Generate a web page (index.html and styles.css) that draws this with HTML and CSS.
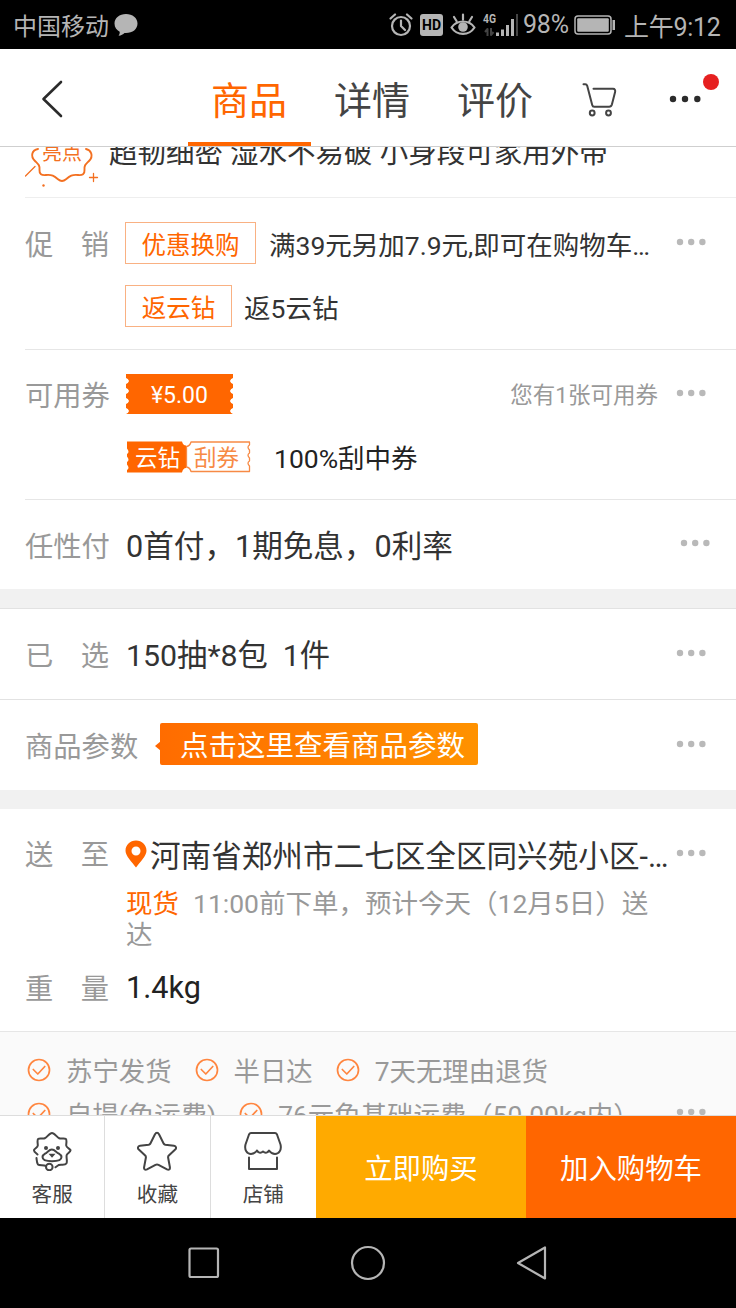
FILE: index.html
```
<!DOCTYPE html>
<html lang="zh-CN">
<head>
<meta charset="utf-8">
<title>商品</title>
<link rel="stylesheet" href="styles.css">
</head>
<body>
<svg class="defs" width="0" height="0" aria-hidden="true">
  <symbol id="dots" viewBox="0 0 30 8"><circle cx="4" cy="4" r="3.2"/><circle cx="15.2" cy="4" r="3.2"/><circle cx="26.400" cy="4" r="3.2"/></symbol>
  <symbol id="check" viewBox="0 0 24 24"><circle cx="12" cy="12" r="10.500"/><path d="M6.300 11.500l4.500 4.500 7-7.500"/></symbol>
</svg>
<div class="phone">
  <header class="status">
    <span class="carrier">中国移动</span>
    <svg class="bubble" viewBox="0 0 24 24"><path d="M12 1C5.500 1 .5 5 .5 10.500c0 3.800 2.200 6.500 5.200 8.200.2 1.700-.4 3-1.200 4 2.700-.2 4.600-1.200 6-2.700 7.500.6 13-3.500 13-9.500C23.500 5 18.500 1 12 1z"/></svg>
    <svg class="alarm" viewBox="0 0 24 24"><circle cx="12" cy="13" r="9"/><path d="M12 7.500V13l4 4M1.500 5.500l4.500-4M22.500 5.500l-4.500-4"/></svg>
    <span class="hd">HD</span>
    <svg class="eye" viewBox="0 0 26 24"><path d="M1.500 14.500C7 6.500 19 6.500 24.500 14.500 19 23 7 23 1.500 14.500zM13 1.500v5M4 4l2.500 4M22 4l-2.500 4"/><circle class="solid" cx="13" cy="14" r="4.800"/></svg>
    <svg class="signal" viewBox="0 0 36 24"><text x="0" y="10" textLength="13" lengthAdjust="spacingAndGlyphs">4G</text><path class="dim" d="M2 19l2.500-3v7M8 15v7l2.500-3"/><path d="M14.500 19.500v3.500M19.500 16.500V23M24.500 12V23M29.500 6V23"/><path class="dim" d="M34 1v22"/></svg>
    <span class="pct">98%</span>
    <svg class="battery" viewBox="0 0 42 20"><rect x="1" y="1" width="36" height="18" rx="3"/><rect class="solid" x="3.200" y="3.200" width="31.600" height="13.600" rx="1"/><path class="solid" d="M38.500 5h2.500v10h-2.500z"/></svg>
    <span class="clock">上午9:12</span>
  </header>

  <nav class="nav">
    <svg class="back" viewBox="0 0 22 38"><path d="M20 2L2.500 19 20 36"/></svg>
    <span class="tab active">商品</span>
    <span class="tab">详情</span>
    <span class="tab">评价</span>
    <svg class="cart" viewBox="0 0 36 36"><path d="M1.500 2.200h1.700c1 0 1.700.6 2 1.600l5 19.200c.3 1.200 1 1.800 2 1.800h15c1.500 0 2.300-.8 2.700-2.200l3.200-12.600c.4-1.700-.3-3.200-2-3.200H11.500"/><circle cx="10.200" cy="31" r="2.400"/><circle cx="26.500" cy="31" r="2.400"/></svg>
    <span class="more"><svg viewBox="0 0 32 8"><circle cx="4" cy="4" r="3.200"/><circle cx="16" cy="4" r="3.200"/><circle cx="28.300" cy="4" r="3.200"/></svg><i class="alert"></i></span>
  </nav>

  <main class="content">
    <section class="highlight">
      <div class="badge">
        <svg viewBox="0 0 76 60"><path d="M13 16c-6 1-8 7-3 12 3 3 5 4 4.500 9-.3 4 2 5.500 6.500 5 6-.6 8 1 12 4.300 3 2.400 5 2.400 8 0 4-3.300 6-4.900 12-4.300 4.500.5 6.800-1 6.500-5-.5-5 1.500-6 4.500-9 5-5 2-11-3-12"/><path class="thin" d="M0.500 43L10 33.500M64.500 44.500h8M68.500 40.500v8"/><circle class="solid" cx="18.500" cy="52.500" r="1.200"/></svg>
        <span>亮点</span>
      </div>
      <p>超韧细密 湿水不易破 小身段可家用外带</p>
    </section>

    <section class="promo inset">
      <div class="line">
        <span class="label wide"><b>促</b><b>销</b></span><span class="tag">优惠换购</span><span class="txt26">满39元另加7.9元,即可在购物车…</span>
        <svg class="dots"><use href="#dots"/></svg>
      </div>
      <div class="line second"><span class="tag short">返云钻</span><span class="txt26">返5云钻</span></div>
    </section>

    <section class="coupon inset">
      <div class="line">
        <span class="label">可用券</span>
        <span class="ticket">¥5.00</span>
        <span class="hint">您有1张可用券</span>
        <svg class="dots"><use href="#dots"/></svg>
      </div>
      <div class="line scratch">
        <span class="duo">
          <svg viewBox="0 0 124 32"><path class="solid" d="M0 .5H55q1 4 4 4V27q-3 0-4 4.500H0V29q3-2 0-5.500V21q3-2 0-5.500V13q3-2 0-5.500z"/><path d="M64 1H122.500V4q-3 2 0 5v3q-3 2 0 5v3q-3 2 0 5v5.500H64q-1-4-4.500-4.500V5.500Q63 5 64 1z"/></svg>
          <span class="duo-a">云钻</span><span class="duo-b">刮券</span>
        </span>
        <span class="win">100%刮中券</span>
      </div>
    </section>

    <section class="pay">
      <span class="label">任性付</span><span class="txt30">0首付，1期免息，0利率</span>
      <svg class="dots"><use href="#dots"/></svg>
    </section>

    <section class="chosen">
      <span class="label wide"><b>已</b><b>选</b></span><span class="txt30 pre">150抽*8包  1件</span>
      <svg class="dots"><use href="#dots"/></svg>
    </section>

    <section class="params">
      <span class="label">商品参数</span>
      <svg class="tip" viewBox="0 0 6 10"><path d="M6 0v10L0 5z"/></svg>
      <span class="banner">点击这里查看商品参数</span>
      <svg class="dots"><use href="#dots"/></svg>
    </section>

    <section class="delivery">
      <div class="line address">
        <span class="label wide"><b>送</b><b>至</b></span>
        <svg class="pin" viewBox="0 0 22 28"><path d="M11 .5C5 .5.500 5 .500 10.700.500 16 7 22 11 27.500 15 22 21.500 16 21.500 10.700 21.500 5 17 .5 11 .5zm0 6a4.500 4.500 0 110 9 4.500 4.500 0 010-9z"/></svg>
        <span class="txt30 place">河南省郑州市二七区全区同兴苑小区-…</span>
        <svg class="dots"><use href="#dots"/></svg>
      </div>
      <p class="eta"><em>现货</em>11:00前下单，预计今天（12月5日）送达</p>
      <div class="line weight"><span class="label wide"><b>重</b><b>量</b></span><span class="txt30 kg">1.4kg</span></div>
    </section>

    <section class="services">
      <div class="srow">
        <svg class="check"><use href="#check"/></svg><span>苏宁发货</span>
        <svg class="check"><use href="#check"/></svg><span>半日达</span>
        <svg class="check"><use href="#check"/></svg><span>7天无理由退货</span>
      </div>
      <div class="srow next">
        <svg class="check"><use href="#check"/></svg><span>自提(免运费)</span>
        <svg class="check"><use href="#check"/></svg><span>76元免基础运费（50.00kg内）</span>
        <svg class="dots"><use href="#dots"/></svg>
      </div>
    </section>
  </main>

  <footer class="actions">
    <div class="act">
      <svg viewBox="0 0 40 40"><path d="M5.500 23.500c-.5-.8-4-2.500-3.500-4.500.5-1.500 3.700-2.500 3.800-4.500.1-2-1-5.500.5-6.700 1.500-1 4.500.2 6.500-.6 2.200-.9 4.700-5.200 7.200-5.200s5 4.300 7.200 5.200c2 .8 5-.4 6.500.6 1.500 1.200.4 4.700.5 6.700.1 2 3.500 3.300 4.300 4.500.6 1.700-3.100 3-3.800 5-.7 2.500 1 6.500-.3 8.500-1.500 2.200-5.700.5-7.700 1.500l-3.200 2.300M4.500 27c.3 2.300.2 5 1.500 6.500 1.400 1.300 5.500.3 8 1.500"/><circle cx="17.300" cy="36" r="3.300"/><path d="M19.800 18.500c-2.500 0-3.500 2-5.300 3.300-2 1.300-4 2-4 4.200 0 3 2.500 4.200 9.500 4.200s9.500-1.200 9.500-4.200c0-2.200-2-2.900-4-4.200-1.800-1.300-3.200-3.300-5.700-3.300z"/><path class="solid" d="M16.500 22.800h7l-3.500 4z"/><circle class="solid" cx="14" cy="17" r="2"/><circle class="solid" cx="26" cy="17" r="2"/></svg>
      <span>客服</span>
    </div>
    <div class="act">
      <svg viewBox="0 0 40 40"><path d="M18 3.300c1-2.200 3-2.200 4 0l4.600 9.200c.3.700.9 1 1.600 1.200l8.800 1.100c2.200.3 2.700 2.200 1.200 3.700l-6.400 6c-.6.600-.8 1.200-.7 2l1.800 9.800c.3 2.100-1.100 3-2.900 2.100l-8.500-4.600c-1-.5-2-.5-3 0L10 38.400c-1.800.9-3.300 0-2.900-2.100l1.800-9.800c.1-.8-.1-1.400-.7-2l-6.400-6c-1.500-1.500-1-3.400 1.200-3.700l8.800-1.100c.7-.2 1.300-.5 1.600-1.200z"/></svg>
      <span>收藏</span>
    </div>
    <div class="act">
      <svg viewBox="0 0 40 40"><path d="M8 2h24c1 0 1.500.5 2 1.500l3.500 10c1.300 5.500-1.500 9.500-5.500 9.500-2.700 0-4.500-1.500-6-3.500-1 2-3.500 3.300-6 1-2.500 2.300-5 1-6-1-1.500 2-3.300 3.500-6 3.500-4 0-6.800-4-5.500-9.500l3.500-10C6.500 2.500 7 2 8 2zM6 26.500V38h28V26.500"/></svg>
      <span>店铺</span>
    </div>
    <div class="buy">立即购买</div>
    <div class="add">加入购物车</div>
  </footer>

  <div class="sysnav">
    <svg viewBox="0 0 32 32"><rect x="1.500" y="1.500" width="28.500" height="28.500" rx="1.500"/></svg>
    <svg class="home" viewBox="0 0 36 36"><circle cx="18" cy="18" r="16"/></svg>
    <svg class="ret" viewBox="0 0 32 36"><path d="M29 2.500v31L2 18z"/></svg>
  </div>
</div>
</body>
</html>
```
FILE: styles.css
```
* { box-sizing: border-box; }
body { margin: 0; background: #fff; font-family: Roboto, "Noto Sans CJK SC", sans-serif; color: #333; }
p { margin: 0; }
b, em, i { font-style: normal; font-weight: inherit; }
svg { display: block; flex: none; fill: none; stroke-linecap: round; stroke-linejoin: round; }
.defs { position: absolute; }
.phone { width: 736px; height: 1308px; display: flex; flex-direction: column; overflow: hidden; white-space: nowrap; }

.status { height: 49px; flex: none; background: #000; color: #b5b5b5; display: flex; align-items: center; padding-left: 13px; }
.status svg { stroke: #b5b5b5; stroke-width: 2.200; }
.status .solid { fill: #b5b5b5; stroke: none; }
.status .dim { stroke: #444; }
.carrier { font-size: 24px; width: 101px; }
.status .bubble { width: 24px; height: 24px; fill: #b5b5b5; stroke: none; }
.alarm { width: 24px; height: 24px; margin-left: 251px; }
.hd { width: 23px; height: 22px; margin-left: 7px; border-radius: 3px; background: #b5b5b5; color: #000; font-size: 14px; line-height: 22px; font-weight: 700; text-align: center; }
.eye { width: 26px; height: 24px; margin-left: 7px; }
.signal { width: 36px; height: 24px; margin-left: 7px; overflow: visible; }
.signal text { font-size: 13px; font-weight: 700; fill: #b5b5b5; stroke: none; }
.signal path { stroke-linecap: butt; stroke-width: 3; }
.signal path.dim { stroke-width: 2; }
.pct { font-size: 25px; width: 45px; margin-left: 4px; letter-spacing: -0.200px; }
.battery { width: 42px; height: 20px; margin-left: 6px; }
.status .battery { stroke-width: 1.500; }
.clock { font-size: 25px; margin-left: 8px; letter-spacing: -0.300px; }

.nav { height: 98px; flex: none; border-bottom: 1px solid #cfcfcf; display: flex; align-items: center; padding-left: 41px; }
.back { width: 22px; height: 38px; stroke: #2b2b2b; stroke-width: 2.600; margin: 3px 125px 0 0; }
.tab { width: 123px; height: 97px; line-height: 104px; text-align: center; font-size: 38px; color: #444; padding-right: 1px; }
.tab.active { color: #f60; border-bottom: 4px solid #f60; }
.cart { width: 36px; height: 36px; margin: 5px 0 0 25px; stroke: #444; stroke-width: 2; }
.more { position: relative; margin: 3px 0 0 51px; }
.more svg { width: 32px; height: 8px; fill: #2b2b2b; }
.alert { position: absolute; left: 34px; top: -21px; width: 16px; height: 16px; border-radius: 50%; background: #e62020; }

.content { flex: 1; min-height: 0; overflow: hidden; display: flex; flex-direction: column; }
.content > section { flex: none; }
.dots { width: 30px; height: 8px; fill: #b9b9b9; margin-left: auto; }
.label { width: 101px; font-size: 28.300px; line-height: 34px; color: #999; flex: none; margin-bottom: -5px; }
.label.wide { display: flex; gap: 27.500px; }
.line { display: flex; align-items: center; }
.inset { margin-left: 25px; border-bottom: 1px solid #e6e6e6; padding-right: 30px; }
.txt26 { font-size: 26.500px; line-height: 34px; margin-bottom: -5px; }
.txt30 { font-size: 30.600px; line-height: 36px; margin-bottom: -2px; }
.pre { white-space: pre; font-size: 30.300px; }

.highlight { height: 51px; margin-left: 25px; border-bottom: 1px solid #eee; display: flex; align-items: flex-start; }
.highlight p { font-size: 28.500px; line-height: 40px; margin: -13px 0 0 8px; }
.badge { position: relative; width: 76px; margin-top: -14px; }
.badge svg { width: 76px; height: 60px; stroke: #f37021; stroke-width: 1.900; }
.badge .thin { stroke-width: 1.300; }
.badge .solid { fill: #f37021; stroke: none; }
.badge span { position: absolute; left: 17px; top: 8px; font-size: 20px; line-height: 24px; color: #f37021; }

.promo { height: 152px; padding-top: 24px; }
.promo .line { height: 42px; }
.promo .second { margin-top: 21px; padding-left: 100px; }
.tag { height: 42px; width: 131px; margin-left: -1px; border: 1px solid #f9b183; color: #f60; font-size: 24.500px; line-height: 45px; text-align: center; margin-right: 13px; }
.tag.short { width: 107px; margin-left: 0; margin-right: 12px; }
.promo .dots { margin-bottom: 2px; }

.coupon { height: 150px; padding-top: 24px; }
.coupon .line { height: 40px; }
.ticket { width: 107px; height: 40px; background: radial-gradient(circle at 0 4px, #fff 2.400px, #f60 3px) 0 3px / 54px 10px repeat-y, radial-gradient(circle at 100% 4px, #fff 2.400px, #f60 3px) 100% 3px / 54px 10px repeat-y; color: #fff; font-size: 23px; line-height: 43px; text-align: center; }
.hint { margin-left: auto; font-size: 22.500px; color: #999; margin-right: 18px; margin-bottom: 2px; }
.coupon .dots { margin-left: 0; margin-bottom: 2px; }
.coupon .scratch { height: 32px; margin-top: 27px; padding-left: 102px; }
.duo { position: relative; width: 124px; height: 32px; }
.duo svg { width: 124px; height: 32px; stroke: #f78a45; stroke-width: 1.300; }
.duo .solid { fill: #f60; stroke: none; }
.duo-a, .duo-b { position: absolute; top: 1px; font-size: 22.500px; line-height: 32px; }
.duo-a { left: 8px; color: #fff; }
.duo-b { left: 67px; color: #f78a45; }
.win { margin-left: 23px; margin-bottom: -4px; font-size: 26.500px; line-height: 34px; color: #222; }

.pay, .chosen, .params { display: flex; align-items: center; padding: 2px 30px 0 25px; }
.pay { height: 89px; padding: 2px 26px 0 25px; }
.pay .dots { margin-bottom: 6px; }
.chosen { height: 111px; border-top: 19px solid #f1f1f1; border-bottom: 1px solid #e2e2e2; box-shadow: inset 0 1px #e2e2e2; padding-top: 2px; }
.chosen .dots, .params .dots { margin-bottom: 4px; }
.params { height: 90px; padding-top: 1px; }
.params .label { width: 130px; margin-bottom: -5px; }
.tip { width: 6px; height: 10px; fill: #f60; }
.banner { width: 318px; height: 42px; margin-left: -1px; margin-bottom: 3px; border-radius: 2px; background: linear-gradient(90deg, #ff6c00, #ff9200); color: #fff; font-size: 28.500px; line-height: 47px; padding-left: 20px; }
.delivery { height: 242px; border-top: 19px solid #f1f1f1; border-bottom: 1px solid #e6e6e6; padding: 23px 30px 0 25px; }
.address { height: 44px; }
.address .label { width: 100px; margin-bottom: -4px; }
.address .place { margin-bottom: -5px; }
.pin { width: 22px; height: 28px; fill: #f60; }
.place { margin-left: 3px; }
.address .dots { margin-bottom: 2px; }
.eta { width: 532px; margin: 12px 0 0 101px; font-size: 26.500px; line-height: 31px; color: #999; white-space: normal; }
.eta em { color: #f60; margin-right: 14px; }
.weight { height: 44px; margin-top: 14px; }
.weight .txt30 { margin-bottom: -3px; }
.weight .label { margin-bottom: -7px; }
.kg { color: #222; }

.services { height: 110px; background: #fafafa; padding: 15px 30px 0 27px; font-size: 26.400px; color: #999; }
.srow { display: flex; align-items: center; height: 45px; }
.srow.next { height: 43px; }
.check { width: 24px; height: 24px; stroke: #ff8640; stroke-width: 1.700; margin-right: 15px; }
.srow span { margin-right: 23px; }
.srow .dots { margin-bottom: 4px; }

.actions { height: 103px; flex: none; border-top: 1px solid #ddd; display: flex; background: #fff; }
.act { width: 105.300px; border-right: 1px solid #ddd; display: flex; flex-direction: column; align-items: center; padding-top: 15px; font-size: 20.600px; line-height: 28px; color: #444; }
.act:nth-child(3) { border-right: 0; }
.act svg { width: 40px; height: 40px; stroke: #444; stroke-width: 2; margin-bottom: 10px; }
.act .solid { fill: #444; stroke: none; }
.buy, .add { flex: 1; color: #fff; font-size: 28.400px; line-height: 108px; text-align: center; }
.buy { background: #fa0; }
.add { background: #f60; }

.sysnav { height: 90px; flex: none; background: #000; display: flex; align-items: center; padding-left: 188px; }
.sysnav svg { width: 32px; height: 32px; stroke: #b5b5b5; stroke-width: 2.200; }
.sysnav .home { width: 36px; height: 36px; margin-left: 130px; }
.sysnav .ret { width: 32px; height: 36px; margin-left: 130px; }
```
